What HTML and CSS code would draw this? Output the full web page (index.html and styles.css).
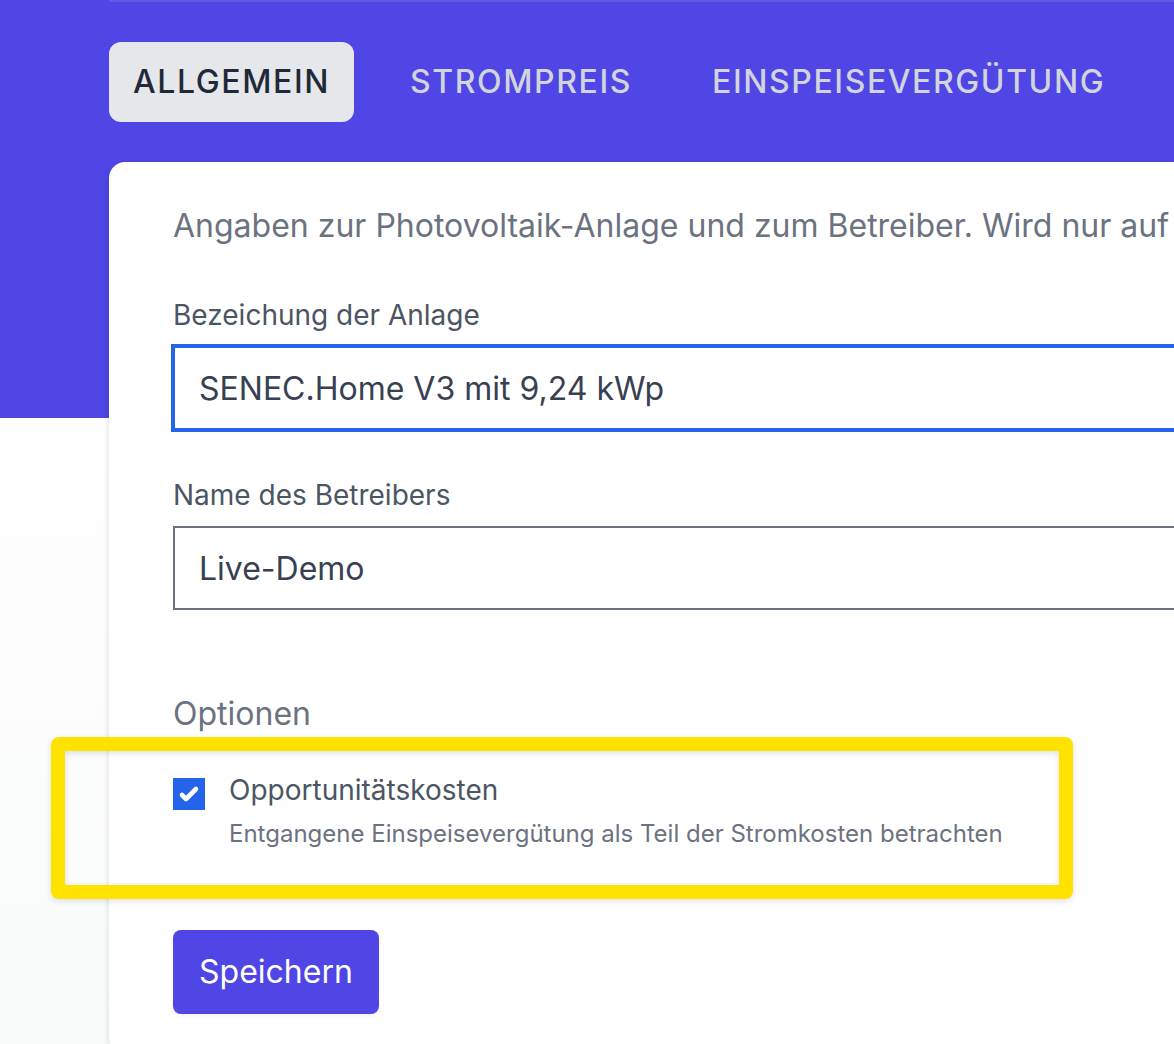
FILE: index.html
```html
<!DOCTYPE html>
<html lang="de">
<head>
<meta charset="utf-8">
<meta name="viewport" content="width=device-width, initial-scale=1">
<title>Einstellungen</title>
<link rel="stylesheet" href="styles.css">
</head>
<body>
<header class="banner">
  <nav class="tabs">
    <a class="tab tab-active" href="#allgemein" aria-current="page">ALLGEMEIN</a>
    <a class="tab" href="#strompreis">STROMPREIS</a>
    <a class="tab" href="#verguetung">EINSPEISEVERGÜTUNG</a>
  </nav>
</header>
<main class="card">
  <form class="form">
    <p class="intro">Angaben zur Photovoltaik-Anlage und zum Betreiber. Wird nur auf</p>
    <div class="field">
      <label for="plant">Bezeichung der Anlage</label>
      <input class="text-input focused" id="plant" type="text" value="SENEC.Home V3 mit 9,24 kWp">
    </div>
    <div class="field">
      <label for="operator">Name des Betreibers</label>
      <input class="text-input" id="operator" type="text" value="Live-Demo">
    </div>
    <h2 class="section-title">Optionen</h2>
    <div class="option">
      <span class="check">
        <input class="checkbox" id="costs" type="checkbox" checked aria-describedby="costs-help">
        <svg class="tick" viewBox="0 0 16 16" fill="none" stroke="#fff" stroke-width="2.3" stroke-linecap="round" stroke-linejoin="round" aria-hidden="true"><path d="M4.5 8.5l2 2 5-5"/></svg>
      </span>
      <div class="option-text">
        <label for="costs">Opportunitätskosten</label>
        <p class="help" id="costs-help">Entgangene Einspeisevergütung als Teil der Stromkosten betrachten</p>
      </div>
      <div class="marker"></div>
    </div>
    <button class="save" type="button">Speichern</button>
  </form>
</main>
</body>
</html>
```
FILE: styles.css
```css
* {
  box-sizing: border-box;
}

body {
  margin: 0;
  min-height: 100vh;
  overflow: hidden;
  background: linear-gradient(#fff 30%, #f9fafa);
  color: #374151;
  font-family: Inter, sans-serif;
  font-size: 32px;
  line-height: 48px;
}

.banner {
  height: 418px;
  padding-left: 109px;
  background: #4f46e5;
}

.tabs {
  display: flex;
  gap: 32px;
  padding-top: 40px;
  border-top: 2px solid #6159ec;
}

.tab {
  padding: 16px 24px;
  border-radius: 12px;
  color: #d1d5db;
  font-weight: 500;
  letter-spacing: 0.05em;
  text-decoration: none;
  white-space: nowrap;
}

.tab-active {
  background: #e5e7eb;
  color: #1f2937;
}

.card {
  margin: -256px 0 0 109px;
  padding: 40px 0 40px 64px;
  border-radius: 16px 0 0 16px;
  background: #fff;
  box-shadow: 0 2px 6px rgb(0 0 0 / 14%);
}

.intro {
  margin: 0 0 41px;
  color: #6b7280;
  white-space: nowrap;
}

.field {
  display: flex;
  flex-direction: column;
  gap: 7px;
  margin-bottom: 41px;
}

label {
  display: block;
  color: #4b5563;
  font-size: 28px;
  line-height: 48px;
}

.text-input {
  width: 100%;
  height: 84px;
  padding: 0 24px;
  border: 2px solid #6b7280;
  border-right: 0;
  background: #fff;
  color: #374151;
  font: inherit;
  outline: none;
}

.focused {
  border-color: #2563eb;
  box-shadow: 0 0 0 2px #2563eb;
}

.section-title {
  margin: 80px 0 32px;
  color: #6b7280;
  font-size: 32px;
  font-weight: 400;
}

.option {
  position: relative;
  display: flex;
  gap: 24px;
  margin-bottom: 76px;
}

.option label {
  margin-bottom: 4px;
  line-height: 40px;
}

.check {
  display: grid;
  width: 32px;
  height: 32px;
  margin-top: 8px;
}

.checkbox {
  grid-area: 1 / 1;
  width: 32px;
  height: 32px;
  margin: 0;
  appearance: none;
  background: #2563eb;
}

.tick {
  grid-area: 1 / 1;
  width: 32px;
  height: 32px;
  pointer-events: none;
}

.help {
  margin: 0;
  color: #6b7280;
  font-size: 24px;
  line-height: 40px;
}

.marker {
  position: absolute;
  top: -33px;
  left: -122px;
  width: 1022px;
  height: 162px;
  border: 14px solid #ffe200;
  border-radius: 8px;
  filter: drop-shadow(0 2px 3px rgb(0 0 0 / 12%));
  pointer-events: none;
}

.save {
  display: block;
  height: 84px;
  padding: 0 26px;
  border: 0;
  border-radius: 8px;
  background: #4f46e5;
  box-shadow: 0 2px 4px rgb(0 0 0 / 5%);
  color: #fff;
  font: inherit;
}
```
